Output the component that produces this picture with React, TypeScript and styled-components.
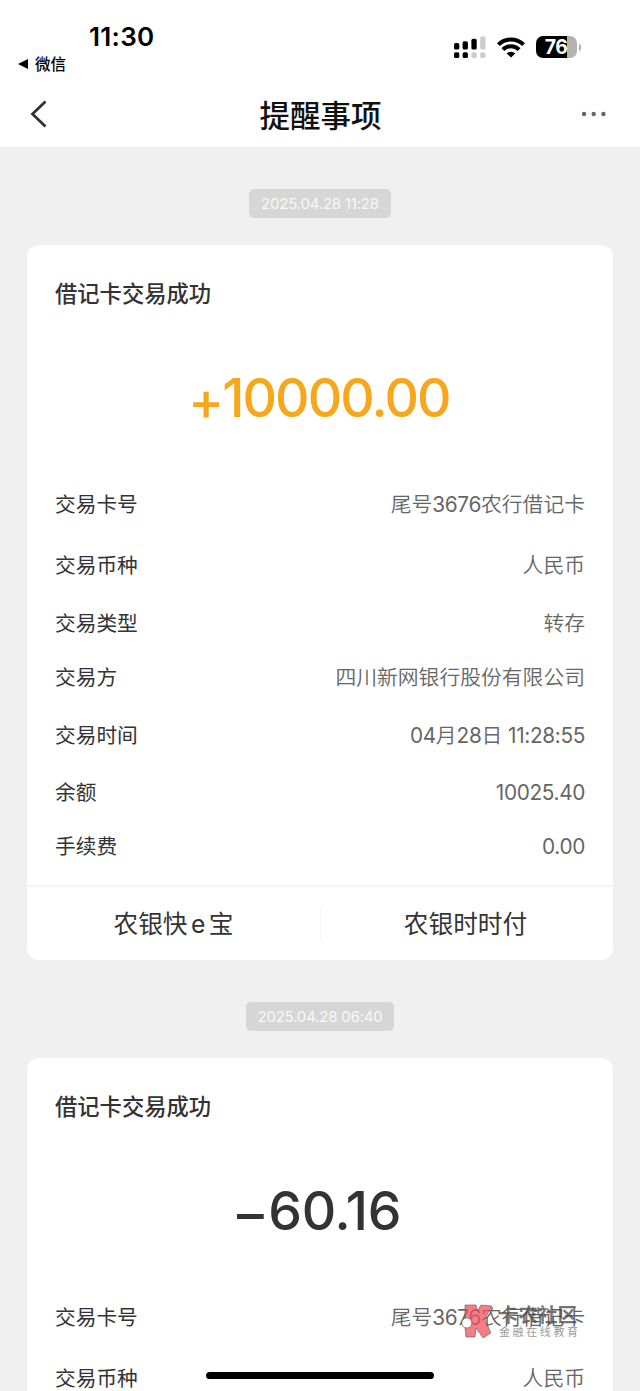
import React from "react";
import styled, { createGlobalStyle } from "styled-components";

const GlobalStyle = createGlobalStyle`
  * { box-sizing: border-box; }
  body {
    margin: 0;
    background: #f0f0f0;
    font-family: Inter, "Noto Sans CJK SC", sans-serif;
    color: #333;
    overflow: hidden;
  }
`;

const Screen = styled.div`
  position: relative;
  width: 640px;
  height: 1391px;
  overflow: hidden;
  background: #f0f0f0;
`;

const Header = styled.header`
  height: 148px;
  background: #fff;
  border-bottom: 1px solid #ebebeb;
`;

const StatusBar = styled.div`
  display: flex;
  justify-content: space-between;
  height: 80px;
  padding: 21px 59px 0 18px;
`;

const ClockGroup = styled.div`
  display: flex;
  flex-direction: column;
`;

const Clock = styled.div`
  margin-left: 71px;
  height: 31px;
  line-height: 31px;
  font-size: 26px;
  font-weight: 600;
  letter-spacing: 0.3px;
  color: #000;
`;

const BackToApp = styled.div`
  display: flex;
  align-items: center;
  gap: 7px;
  height: 24px;
  font-size: 15.5px;
  line-height: 24px;
  font-weight: 500;
  color: #000;
`;

const BackLabel = styled.span`
  padding-top: 2px;
`;

const StatusIcons = styled.div`
  display: flex;
  align-items: center;
  gap: 11px;
  height: 52px;
`;

const Battery = styled.div`
  display: flex;
  align-items: center;
  gap: 2px;
`;

const BatteryBody = styled.div`
  width: 41px;
  height: 22px;
  border-radius: 7px;
  background: linear-gradient(to right, #000 31px, #b3b3b3 31px);
  color: #fff;
  font-size: 19.5px;
  font-weight: 700;
  line-height: 23px;
  text-align: center;
  letter-spacing: -0.6px;
`;

const BatteryTip = styled.div`
  width: 2.5px;
  height: 7px;
  border-radius: 0 3px 3px 0;
  background: #b3b3b3;
`;

const NavBar = styled.div`
  display: grid;
  grid-template-columns: 60px 1fr 60px;
  align-items: center;
  height: 68px;
  padding: 0 27px 0 28px;
`;

const NavTitle = styled.h1`
  margin: 0;
  padding-top: 3px;
  text-align: center;
  font-size: 30.5px;
  line-height: 44px;
  font-weight: 500;
  color: #111;
`;

const MoreIcon = styled.svg`
  justify-self: end;
  margin-right: 6px;
`;

const Feed = styled.main`
  display: flex;
  flex-direction: column;
  align-items: center;
  padding: 41px 27px 0;
  font-feature-settings: "calt" 0;
`;

const DateChip = styled.time<{ $width: number }>`
  width: ${(p) => p.$width}px;
  height: 29px;
  border-radius: 5px;
  background: #d6d6d6;
  color: #f8f8f8;
  font-size: 15px;
  line-height: 30px;
  text-align: center;
  white-space: nowrap;
  letter-spacing: -0.2px;
`;

const Card = styled.section`
  width: 586px;
  height: 715px;
  margin: 27px 0 42px;
  border-radius: 12px;
  background: #fff;
  flex: none;
`;

const CardBody = styled.div`
  height: 640px;
  padding: 33px 28px 0;
`;

const CardTitle = styled.h2`
  margin: 0;
  font-size: 22.3px;
  line-height: 32px;
  font-weight: 500;
`;

const Amount = styled.div<{ $color: string; $spacing: number }>`
  display: flex;
  justify-content: center;
  margin: 53px 0 57px;
  padding-right: 2px;
  height: 70px;
  line-height: 70px;
  font-size: 53.5px;
  font-weight: 500;
  letter-spacing: ${(p) => p.$spacing}px;
  color: ${(p) => p.$color};
`;

const Sign = styled.span<{ $gap: number }>`
  padding-top: 3px;
  margin-right: ${(p) => p.$gap}px;
`;

const Row = styled.div<{ $gap: number }>`
  display: flex;
  justify-content: space-between;
  height: 30px;
  margin-top: ${(p) => p.$gap}px;
  font-size: 20.7px;
  line-height: 30px;
`;

const Value = styled.span`
  color: #666;
  font-weight: 350;
  font-size: 20.8px;
`;

const Latin = styled.span`
  font-weight: 380;
  letter-spacing: -0.35px;
`;

const CardFooter = styled.div`
  display: flex;
  align-items: center;
  height: 75px;
  border-top: 2px solid #f6f6f6;
`;

const FooterLink = styled.a`
  width: 50%;
  text-align: center;
  font-size: 24.7px;
  line-height: 36px;
  word-spacing: -3.5px;
  & + & {
    padding-right: 3px;
    border-left: 1px solid #f6f6f6;
  }
`;

const HomeIndicator = styled.div`
  position: absolute;
  left: 206px;
  bottom: 12px;
  width: 228px;
  height: 7px;
  border-radius: 4px;
  background: #000;
`;

const Watermark = styled.div`
  position: absolute;
  left: 461px;
  top: 1303px;
  display: flex;
  gap: 6px;
`;

const WatermarkText = styled.div`
  display: flex;
  flex-direction: column;
`;

const WatermarkName = styled.span`
  height: 22px;
  font-size: 19.5px;
  line-height: 25px;
  font-weight: 700;
  color: rgba(70, 70, 70, 0.75);
`;

const WatermarkTag = styled.span`
  font-size: 11px;
  line-height: 14px;
  letter-spacing: 2.6px;
  color: #999;
`;

type Entry = { label: string; value: string; gap: number };

const entries: Entry[] = [
  { label: "交易卡号", value: "尾号3676农行借记卡", gap: 0 },
  { label: "交易币种", value: "人民币", gap: 31 },
  { label: "交易类型", value: "转存", gap: 28 },
  { label: "交易方", value: "四川新网银行股份有限公司", gap: 24 },
  { label: "交易时间", value: "04月28日 11:28:55", gap: 28 },
  { label: "余额", value: "10025.40", gap: 27 },
  { label: "手续费", value: "0.00", gap: 24 },
];

const MixedText = ({ text }: { text: string }) => (
  <>
    {text.split(/([0-9:.]+)/).map((part, i) =>
      i % 2 ? <Latin key={i}>{part}</Latin> : part
    )}
  </>
);

const SignalIcon = () => (
  <svg width="33" height="23" viewBox="0 0 33 23">
    <g fill="#000">
      <rect x="1" y="7" width="5.3" height="6.5" rx="1.6" />
      <rect x="9.6" y="5.3" width="5.3" height="8.2" rx="1.6" />
      <rect x="18.4" y="2.7" width="5.3" height="10.8" rx="1.6" />
      <rect x="1" y="16.3" width="5.3" height="5.7" rx="1.6" />
      <rect x="9.6" y="16.3" width="5.3" height="5.7" rx="1.6" />
    </g>
    <g fill="#ccc">
      <rect x="27.2" y="0.5" width="5.3" height="13" rx="1.6" />
      <rect x="18.4" y="16.3" width="5.3" height="5.7" rx="1.6" />
      <rect x="27.2" y="16.3" width="5.3" height="5.7" rx="1.6" />
    </g>
  </svg>
);

const WifiIcon = () => (
  <svg width="28" height="21" viewBox="0 0 28 21">
    <g fill="none" stroke="#000" strokeWidth="4">
      <path d="M1.4 7.6a18 18 0 0 1 25.2 0" />
      <path d="M5.9 12.7a11.4 11.4 0 0 1 16.2 0" />
    </g>
    <path d="M14 20.6 9.7 16.4a6.2 6.2 0 0 1 8.6 0z" fill="#000" />
  </svg>
);

type CardProps = {
  sign: string;
  amount: string;
  color: string;
  spacing: number;
  signGap: number;
};

const MessageCard = ({ sign, amount, color, spacing, signGap }: CardProps) => (
  <Card>
    <CardBody>
      <CardTitle>借记卡交易成功</CardTitle>
      <Amount $color={color} $spacing={spacing}>
        <Sign $gap={signGap}>{sign}</Sign>
        <span>{amount}</span>
      </Amount>
      {entries.map((e) => (
        <Row key={e.label} $gap={e.gap}>
          <span>{e.label}</span>
          <Value>
            <MixedText text={e.value} />
          </Value>
        </Row>
      ))}
    </CardBody>
    <CardFooter>
      <FooterLink>农银快 e 宝</FooterLink>
      <FooterLink>农银时时付</FooterLink>
    </CardFooter>
  </Card>
);

export default function App() {
  return (
    <Screen>
      <GlobalStyle />
      <Header>
        <StatusBar>
          <ClockGroup>
            <Clock>11:30</Clock>
            <BackToApp>
              <svg width="10" height="10" viewBox="0 0 10 10">
                <path d="M0 5 10 0v10z" fill="#000" />
              </svg>
              <BackLabel>微信</BackLabel>
            </BackToApp>
          </ClockGroup>
          <StatusIcons>
            <SignalIcon />
            <WifiIcon />
            <Battery>
              <BatteryBody>76</BatteryBody>
              <BatteryTip />
            </Battery>
          </StatusIcons>
        </StatusBar>
        <NavBar>
          <svg width="20" height="28" viewBox="0 0 20 28">
            <path d="M17.5 1.5 4.5 14l13 12.5" fill="none" stroke="#333" strokeWidth="2.8" />
          </svg>
          <NavTitle>提醒事项</NavTitle>
          <MoreIcon width="26" height="6" viewBox="0 0 26 6">
            <g fill="#666">
              <circle cx="3" cy="3" r="2.2" />
              <circle cx="12.7" cy="3" r="2.2" />
              <circle cx="22.4" cy="3" r="2.2" />
            </g>
          </MoreIcon>
        </NavBar>
      </Header>
      <Feed>
        <DateChip $width={142}>2025.04.28 11:28</DateChip>
        <MessageCard sign="+" amount="10000.00" color="#f6a71b" spacing={-1.9} signGap={0} />
        <DateChip $width={148}>2025.04.28 06:40</DateChip>
        <MessageCard sign="–" amount="60.16" color="#333" spacing={-0.3} signGap={5} />
      </Feed>
      <Watermark>
        <svg width="32" height="36" viewBox="0 0 32 36">
          <path
            d="M4 2h11l1.5 6L20 2l11 1-7.500 13L30 30l-8 5-7-10-1 9H5l-1-9z"
            fill="#f0515d"
            fillOpacity="0.75"
            stroke="#555"
            strokeOpacity="0.7"
            strokeWidth="0.8"
          />
          <circle cx="5.8" cy="20" r="5" fill="#fff" stroke="#777" strokeWidth="0.8" />
        </svg>
        <WatermarkText>
          <WatermarkName>卡农社区</WatermarkName>
          <WatermarkTag>金融在线教育</WatermarkTag>
        </WatermarkText>
      </Watermark>
      <HomeIndicator />
    </Screen>
  );
}
